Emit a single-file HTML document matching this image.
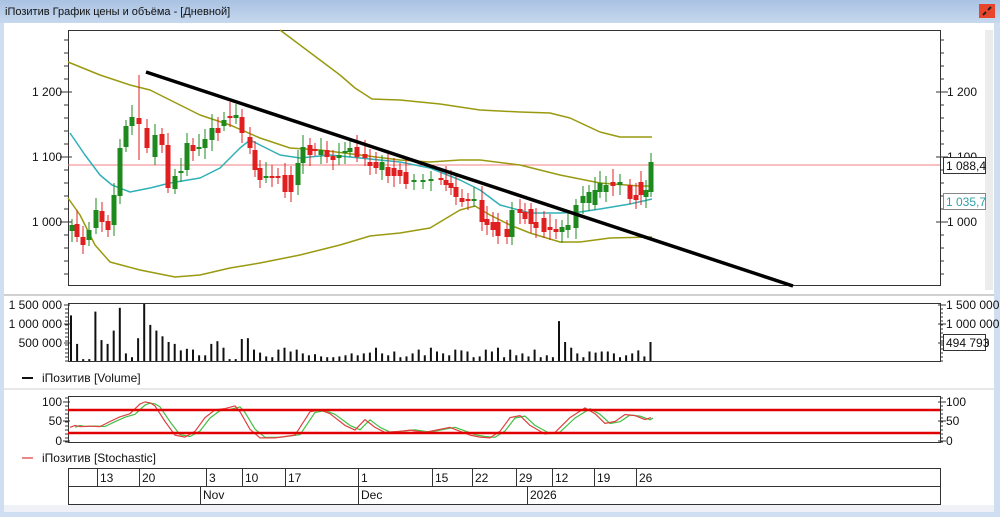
<!DOCTYPE html>
<html><head><meta charset="utf-8"><style>
html,body{margin:0;padding:0;}
body{width:1000px;height:517px;overflow:hidden;background:#cfdff1;font-family:"Liberation Sans","DejaVu Sans",sans-serif;position:relative}
</style></head><body>
<svg id="s" width="1000" height="517" xmlns="http://www.w3.org/2000/svg" style="position:absolute;left:0;top:0" font-family="Liberation Sans, DejaVu Sans, sans-serif" font-size="12">
<defs><linearGradient id="tb" x1="0" y1="0" x2="0" y2="1"><stop offset="0" stop-color="#a9c2e2"/><stop offset="1" stop-color="#c6d8ee"/></linearGradient></defs>
<rect x="0" y="0" width="1000" height="23" fill="url(#tb)"/>
<text x="5" y="15" font-size="11" fill="#111">iПозитив График цены и объёма - [Дневной]</text>
<rect x="979" y="4" width="16" height="14" fill="#e8452c"/>
<path d="M983 15 l3 -3 M988 10 l3 -3" stroke="#222" stroke-width="2"/>
<rect x="4" y="23" width="990" height="487" fill="#fff"/>
<rect x="985" y="30" width="8" height="260" fill="#ececec"/>
<rect x="4" y="505" width="990" height="7" fill="#eef2f7"/>
<line x1="4" y1="295" x2="994" y2="295" stroke="#d0d0d0" stroke-width="2"/>
<line x1="4" y1="389" x2="994" y2="389" stroke="#d0d0d0" stroke-width="1"/>
<g id="g"></g>
</svg>
<script>
var g=document.getElementById('g'),h='';
function L(x1,y1,x2,y2,c,w){h+='<line x1="'+x1+'" y1="'+y1+'" x2="'+x2+'" y2="'+y2+'" stroke="'+c+'" stroke-width="'+(w||1)+'"/>';}
function P(pts,c,w){h+='<polyline fill="none" stroke="'+c+'" stroke-width="'+(w||1.5)+'" stroke-linejoin="round" points="'+pts.map(function(p){return p.join(',')}).join(' ')+'"/>';}
function T(x,y,t,a,c){h+='<text x="'+x+'" y="'+y+'" text-anchor="'+(a||'start')+'" fill="'+(c||'#111')+'">'+t+'</text>';}
// main frame
h+='<rect x="68.5" y="30.5" width="872" height="255" fill="none" stroke="#333"/>';
for(var y=40;y<285;y+=13){L(940,y,944,y,'#333');L(64,y,68,y,'#333');}
[[92,'1 200'],[157,'1 100'],[222,'1 000']].forEach(function(a){L(936,a[0],948,a[0],'#333');L(60,a[0],72,a[0],'#333');T(62,a[0]+4,a[1],'end');T(947,a[0]+4,a[1]);});
L(68,165,940,165,'#f08080',1);
// bands
P([[280,30],[300,45],[320,60],[340,75],[355,88],[372,99],[400,100],[440,104],[480,110],[520,112],[550,113],[570,118],[600,132],[620,137],[652,137]],'#9a9a10');
P([[68,62],[100,75],[130,85],[150,90],[170,100],[200,115],[230,125],[260,138],[290,148],[320,150],[360,155],[400,160],[430,162],[460,160],[480,160],[520,165],[560,175],[600,183],[640,186],[652,186]],'#9a9a10');
P([[68,198],[80,215],[95,245],[110,262],[140,270],[175,277],[200,275],[230,268],[260,263],[300,255],[340,245],[370,236],[400,233],[430,228],[460,210],[475,206],[490,215],[510,225],[530,233],[560,242],[580,242],[610,238],[652,237]],'#9a9a10');
P([[70,133],[85,155],[100,175],[112,185],[130,192],[150,188],[170,183],[200,178],[220,168],[240,148],[250,140],[260,145],[280,155],[300,158],[330,155],[360,158],[400,162],[430,168],[460,180],[480,190],[500,205],[530,213],[560,213],[580,212],[600,209],[630,204],[652,199]],'#30b0b8');
// candles [x,top,bottom,green]
var C=[[72,225,231,1],[77,224,237,0],[83,237,245,0],[89,230,240,1],[96,210,228,1],[102,211,222,0],[108,221,230,0],[114,195,225,1],[120,148,196,1],[126,126,147,1],[132,117,126,1],[139,118,124,0],[147,128,148,0],[155,135,157,1],[162,134,145,0],[168,145,188,0],[175,176,189,1],[181,171,173,1],[187,143,170,1],[193,145,151,0],[199,147,149,1],[205,139,148,1],[212,128,140,1],[218,128,133,0],[224,120,126,1],[230,116,118,0],[236,115,118,1],[242,117,133,0],[250,137,148,0],[255,150,170,0],[260,168,180,0],[266,176,178,1],[272,176,178,0],[278,176,178,0],[285,175,192,0],[291,175,192,0],[298,163,185,1],[303,147,163,1],[310,145,155,0],[315,149,151,0],[321,150,155,1],[327,150,157,0],[333,156,160,0],[339,155,158,1],[345,151,153,1],[350,148,152,1],[357,147,157,0],[365,154,158,0],[370,162,166,0],[376,162,168,0],[382,162,170,1],[388,167,176,0],[394,168,176,0],[400,170,176,0],[406,172,184,0],[414,180,182,1],[423,180,182,1],[431,179,181,1],[441,178,180,0],[446,180,185,0],[451,183,188,0],[456,187,197,0],[462,198,202,0],[468,199,201,0],[474,199,201,1],[482,200,222,0],[487,219,225,0],[493,222,230,0],[498,222,236,0],[507,229,237,0],[512,210,237,1],[520,209,213,0],[525,212,219,0],[531,209,224,0],[536,222,228,0],[544,218,232,0],[550,227,230,0],[556,229,232,0],[562,227,232,1],[568,225,230,1],[576,205,228,1],[583,196,203,1],[589,192,203,1],[595,190,205,1],[600,183,192,1],[606,185,192,1],[613,182,186,0],[620,182,185,1],[630,185,199,0],[636,195,200,0],[641,182,195,0],[646,190,197,1],[651,162,192,1]];
C.forEach(function(c){var col=c[3]?'#1e8a1e':'#e02020';L(c[0],c[1]-6-(c[0]*7%9),c[0],c[2]+5+(c[0]*3%7),col,1);h+='<rect x="'+(c[0]-2.5)+'" y="'+c[1]+'" width="5" height="'+Math.max(2,c[2]-c[1])+'" fill="'+col+'"/>';});
L(139,75,139,160,'#e02020',1);
L(146,72,793,286,'#000',3.5);
h+='<rect x="943.5" y="157.5" width="42" height="16" fill="#fff" stroke="#333"/>';T(946,170,'1 088,4');
h+='<rect x="943.5" y="193.5" width="42" height="16" fill="#fff" stroke="#888"/>';T(946,206,'1 035,7','start','#30a0a8');
// volume
h+='<rect x="68.5" y="303.5" width="872" height="58" fill="none" stroke="#333"/>';
for(var y=305;y<362;y+=4){L(940,y,943,y,'#333');L(65,y,68,y,'#333');}
[[305,'1 500 000'],[324,'1 000 000'],[343,'500 000']].forEach(function(a){L(64,a[0],70,a[0],'#333');L(938,a[0],946,a[0],'#333');T(62,a[0]+4,a[1],'end');T(946,a[0]+4,a[1]);});
var V=[1.2,.45,.05,.05,1.3,.55,.45,.8,1.4,.2,.1,.6,1.5,.95,.8,.65,.5,.45,.28,.32,.3,.15,.15,.45,.52,.35,.05,.05,.58,.6,.3,.22,.12,.1,.3,.35,.25,.3,.2,.15,.18,.12,.1,.1,.12,.15,.2,.15,.2,.22,.35,.2,.15,.25,.1,.12,.2,.3,.15,.35,.25,.2,.15,.3,.28,.25,.1,.12,.3,.25,.35,.1,.3,.15,.2,.12,.3,.1,.15,.1,1.05,.5,.35,.2,.1,.25,.22,.25,.25,.2,.1,.15,.2,.28,.12,.5];
V.forEach(function(v,i){var x=71+i*6.1;L(x.toFixed(1),361,x.toFixed(1),(361-v*38).toFixed(1),'#111',2);});
h+='<rect x="943.5" y="334.5" width="42" height="16" fill="#fff" stroke="#333"/>';T(946,347,'494 793');
L(22,378,33,378,'#111',2);T(42,382,'iПозитив [Volume]');
// stochastic
h+='<rect x="68.5" y="396.5" width="872" height="46" fill="none" stroke="#333"/>';
for(var y=398;y<443;y+=4){L(940,y,943,y,'#333');L(65,y,68,y,'#333');}
[[402,'100'],[421,'50'],[441,'0']].forEach(function(a){L(63,a[0],70,a[0],'#333');L(938,a[0],946,a[0],'#333');T(62,a[0]+4,a[1],'end');T(946,a[0]+4,a[1]);});
var R=[[70,35],[75,40],[80,37],[90,38],[100,37],[110,50],[120,62],[130,70],[140,95],[145,100],[150,98],[155,90],[165,50],[175,15],[185,10],[195,25],[205,60],[215,80],[225,83],[235,90],[240,75],[250,30],[260,8],[275,8],[295,15],[310,75],[320,80],[330,70],[345,40],[355,28],[365,55],[375,35],[385,22],[400,25],[410,28],[425,22],[440,30],[450,35],[460,25],[470,15],[480,10],[490,8],[500,25],[510,60],[520,65],[530,40],[545,18],[555,22],[570,60],[585,85],[595,70],[605,45],[615,50],[625,68],[635,65],[645,55],[651,60]];
function sy(v){return (441-v*0.39).toFixed(1);}
P(R.map(function(p){return [Math.min(p[0]+5,653),sy(p[1]*0.95+2)];}),'#40c040',1.2);
P(R.map(function(p){return [p[0],sy(p[1])];}),'#e04040',1.2);
L(68,410,940,410,'#e00000',2.5);L(68,433,940,433,'#e00000',2.5);
L(22,458,33,458,'#e06060',1.5);T(42,462,'iПозитив [Stochastic]');
// date axis
h+='<rect x="68.5" y="468.5" width="872" height="36" fill="none" stroke="#333"/>';L(68,486.5,940,486.5,'#333');
[[97,'13'],[139,'20'],[206,'3'],[242,'10'],[285,'17'],[358,'1'],[432,'15'],[472,'22'],[516,'29'],[552,'12'],[594,'19'],[636,'26']].forEach(function(a){L(a[0]+.5,468,a[0]+.5,486,'#333');T(a[0]+3,482,a[1]);});
[[200,'Nov'],[358,'Dec'],[527,'2026']].forEach(function(a){L(a[0]+.5,486,a[0]+.5,504,'#333');T(a[0]+3,499,a[1]);});
g.innerHTML=h;
</script>
</body></html>
